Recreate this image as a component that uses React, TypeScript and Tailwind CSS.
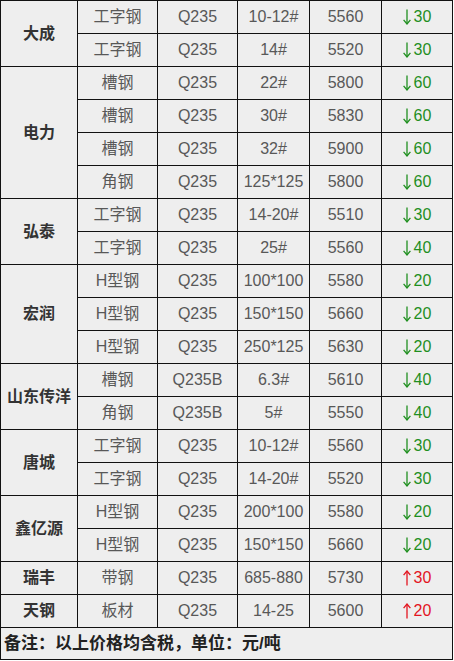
import React from "react";

type Row = [string, string, string, string, number, boolean];

const groups: { name: string; rows: Row[] }[] = [
  {
    name: "大成",
    rows: [
      ["工字钢", "Q235", "10-12#", "5560", 30, false],
      ["工字钢", "Q235", "14#", "5520", 30, false],
    ],
  },
  {
    name: "电力",
    rows: [
      ["槽钢", "Q235", "22#", "5800", 60, false],
      ["槽钢", "Q235", "30#", "5830", 60, false],
      ["槽钢", "Q235", "32#", "5900", 60, false],
      ["角钢", "Q235", "125*125", "5800", 60, false],
    ],
  },
  {
    name: "弘泰",
    rows: [
      ["工字钢", "Q235", "14-20#", "5510", 30, false],
      ["工字钢", "Q235", "25#", "5560", 40, false],
    ],
  },
  {
    name: "宏润",
    rows: [
      ["H型钢", "Q235", "100*100", "5580", 20, false],
      ["H型钢", "Q235", "150*150", "5660", 20, false],
      ["H型钢", "Q235", "250*125", "5630", 20, false],
    ],
  },
  {
    name: "山东传洋",
    rows: [
      ["槽钢", "Q235B", "6.3#", "5610", 40, false],
      ["角钢", "Q235B", "5#", "5550", 40, false],
    ],
  },
  {
    name: "唐城",
    rows: [
      ["工字钢", "Q235", "10-12#", "5560", 30, false],
      ["工字钢", "Q235", "14-20#", "5520", 30, false],
    ],
  },
  {
    name: "鑫亿源",
    rows: [
      ["H型钢", "Q235", "200*100", "5580", 20, false],
      ["H型钢", "Q235", "150*150", "5660", 20, false],
    ],
  },
  { name: "瑞丰", rows: [["带钢", "Q235", "685-880", "5730", 30, true]] },
  { name: "天钢", rows: [["板材", "Q235", "14-25", "5600", 20, true]] },
];

const spanClass: Record<number, string> = {
  1: "row-span-1",
  2: "row-span-2",
  3: "row-span-3",
  4: "row-span-4",
};

const font = {
  fontFamily: '"Liberation Sans", "Noto Sans CJK SC", sans-serif',
};

function Arrow({ up }: { up: boolean }) {
  return (
    <svg width="8" height="16" viewBox="0 0 8 16" className="mr-[3px]">
      {up ? (
        <>
          <line x1="4" y1="1" x2="4" y2="15.5" stroke="currentColor" strokeWidth="1.3" />
          <polyline points="0.6,5.2 4,1 7.4,5.2" fill="none" stroke="currentColor" strokeWidth="1.3" />
        </>
      ) : (
        <>
          <line x1="4" y1="0.5" x2="4" y2="15" stroke="currentColor" strokeWidth="1.3" />
          <polyline points="0.6,10.8 4,15 7.4,10.8" fill="none" stroke="currentColor" strokeWidth="1.3" />
        </>
      )}
    </svg>
  );
}

export default function App() {
  const cell = "bg-[#eeeeee] flex items-center justify-center text-[16px] text-[#585858]";
  return (
    <div className="w-[454px] h-[661px] bg-white" style={font}>
      <div className="w-[453px] bg-[#111111] p-px gap-px grid grid-cols-[76px_79px_79px_71px_71px_70px] grid-rows-[repeat(19,32px)_31px]">
        {groups.map((g) => (
          <React.Fragment key={g.name}>
            <div
              className={`${spanClass[g.rows.length]} bg-[#eeeeee] flex items-center justify-center text-[16px] font-bold text-[#333333]`}
            >
              {g.name}
            </div>
            {g.rows.map((r, i) => (
              <React.Fragment key={i}>
                <div className={cell}>{r[0]}</div>
                <div className={cell}>{r[1]}</div>
                <div className={cell}>{r[2]}</div>
                <div className={cell}>{r[3]}</div>
                <div
                  className={`bg-[#eeeeee] flex items-center justify-center text-[16px] ${
                    r[5] ? "text-[#e3141f]" : "text-[#1f8f1f]"
                  }`}
                >
                  <Arrow up={r[5]} />
                  <span>{r[4]}</span>
                </div>
              </React.Fragment>
            ))}
          </React.Fragment>
        ))}
        <div className="col-span-6 bg-[#eeeeee] flex items-center pl-[3px] text-[17px] font-bold text-[#222222]">
          备注：以上价格均含税，单位：元/吨
        </div>
      </div>
    </div>
  );
}
